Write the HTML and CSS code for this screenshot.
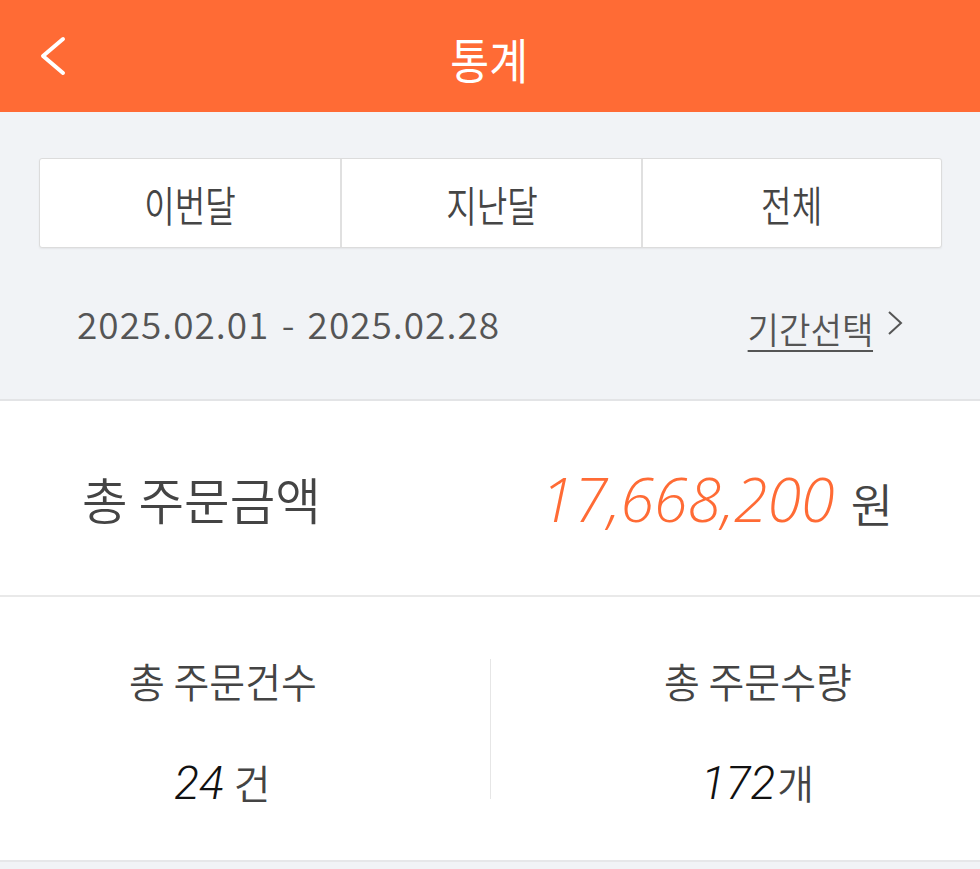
FILE: index.html
```
<html>

<head>
    <title>통계</title>
    <link rel="stylesheet" href="styles.css">
</head>

<body>
    <div class="header">
        <button class="back-button">
            <svg width="30" height="42" viewBox="0 0 30 42">
                <path d="M24 3 L4 20 L24 37" fill="none" stroke="#ffffff" stroke-width="4" stroke-linecap="round" stroke-linejoin="round" />
            </svg>
        </button>
        <div class="title"><span class="narrow">통계</span></div>
    </div>

    <div class="period">
        <div class="tabs">
            <div class="tab"><span class="narrow tab-text">이번달</span></div>
            <div class="tab"><span class="narrow tab-text">지난달</span></div>
            <div class="tab"><span class="narrow tab-text">전체</span></div>
        </div>
        <div class="date-row">
            <span class="date-text">2025.02.01 - 2025.02.28</span>
            <span class="date-select">
                <span class="narrow select-text">기간선택</span>
                <svg class="select-arrow" width="16" height="26" viewBox="0 0 16 26">
                    <path d="M2 2 L14 13 L2 24" fill="none" stroke="#555555" stroke-width="2" />
                </svg>
            </span>
        </div>
    </div>

    <div class="total">
        <span class="narrow total-label">총 주문금액</span>
        <span class="total-value">
            <span class="amount">17,668,200</span>
            <span class="unit">원</span>
        </span>
    </div>

    <div class="stats">
        <div class="stat">
            <span class="narrow stat-label">총 주문건수</span>
            <span class="stat-value"><span class="count">24</span><span class="count-unit">건</span></span>
        </div>
        <div class="stat-divider"></div>
        <div class="stat">
            <span class="narrow stat-label">총 주문수량</span>
            <span class="stat-value"><span class="count">172</span><span class="count-unit tight">개</span></span>
        </div>
    </div>

    <div class="bottom"></div>
</body>

</html>
```

FILE: styles.css
```
html,
body {
    margin: 0;
    height: 100%;
}

body {
    font-family: 'Noto Sans CJK KR', sans-serif;
    font-weight: 350;
    background-color: #f1f3f6;
    overflow: hidden;
}

.narrow {
    display: inline-block;
    white-space: nowrap;
}

.header {
    height: 112px;
    background-color: #ff6b35;
    display: flex;
    align-items: center;
    position: relative;
}

.back-button {
    border: none;
    background: none;
    padding: 0;
    margin-left: 39px;
    margin-top: 2px;
    width: 30px;
    height: 42px;
    cursor: pointer;
    position: relative;
    z-index: 1;
}

.title {
    position: absolute;
    left: 0;
    right: 0;
    top: 0;
    bottom: 0;
    display: flex;
    justify-content: center;
    align-items: center;
    color: #ffffff;
    font-size: 48px;
    font-weight: 400;
    padding-top: 4px;
    padding-right: 2px;
}

.title .narrow {
    transform: scaleX(0.88);
}

.period {
    padding: 46px 38px 0 39px;
    border-bottom: 2px solid #e3e4e6;
}

.tabs {
    display: grid;
    grid-template-columns: 1fr 1fr 1fr;
    height: 90px;
    border: 1px solid #dcdcdc;
    border-radius: 3px;
    background-color: #ffffff;
    box-shadow: 0 1px 2px rgba(0, 0, 0, 0.06);
    box-sizing: border-box;
}

.tab {
    display: flex;
    justify-content: center;
    align-items: center;
    border-left: 2px solid #e0e0e0;
}

.tab:first-child {
    border-left: none;
}

.tab-text {
    font-size: 42px;
    color: #454545;
    transform: scaleX(0.79);
}

.date-row {
    height: 151px;
    display: flex;
    justify-content: space-between;
    align-items: center;
    padding: 0 38px 0 38px;
}

.date-text {
    font-size: 37px;
    color: #555555;
    letter-spacing: 1px;
    word-spacing: 3px;
    white-space: nowrap;
    padding-bottom: 2px;
}

.date-select {
    display: flex;
    align-items: center;
    color: #555555;
}

.select-text {
    font-size: 36px;
    transform: scaleX(0.95);
    transform-origin: right center;
    border-bottom: 2px solid #555555;
    line-height: 44px;
    margin-top: 10px;
}

.select-arrow {
    margin-left: 14px;
    margin-right: 1px;
    margin-bottom: 2px;
}

.total {
    background-color: #ffffff;
    height: 194px;
    display: flex;
    justify-content: space-between;
    align-items: center;
    padding: 0 87px 0 82px;
    border-bottom: 2px solid #e9e9e9;
}

.total-label {
    font-size: 50px;
    color: #444444;
    transform: scaleX(0.99);
    transform-origin: left center;
}

.total-value {
    display: flex;
    align-items: baseline;
}

.amount {
    font-family: 'Open Sans', sans-serif;
    font-style: italic;
    font-weight: 300;
    font-size: 61px;
    color: #ff6b35;
}

.unit {
    font-size: 46px;
    color: #444444;
    margin-left: 16px;
}

.stats {
    background-color: #ffffff;
    display: grid;
    grid-template-columns: 1fr 90px 1fr;
    padding: 62px 0 52px;
    border-bottom: 2px solid #e6e7e9;
}

.stat {
    display: flex;
    flex-direction: column;
    align-items: center;
}

.stat-label {
    font-size: 41px;
    line-height: 42px;
    color: #444444;
    transform: scaleX(0.95);
}

.stat-value {
    margin-top: 56px;
    line-height: 50px;
    display: flex;
    align-items: baseline;
}

.count {
    font-family: 'Roboto', sans-serif;
    font-style: italic;
    font-size: 46px;
    color: #111111;
}

.count-unit {
    font-size: 40px;
    color: #444444;
    margin-left: 10px;
}

.count-unit.tight {
    margin-left: 2px;
}

.stat-divider {
    justify-self: center;
    width: 1px;
    height: 140px;
    background-color: #e6e6e6;
}
```
